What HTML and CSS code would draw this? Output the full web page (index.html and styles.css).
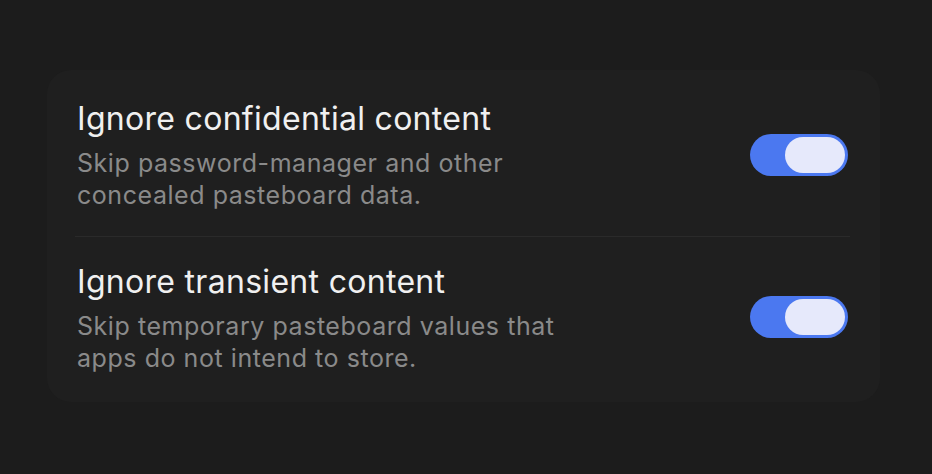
FILE: index.html
```html
<!DOCTYPE html>
<html>
<head>
<meta charset="utf-8">
<link rel="stylesheet" href="styles.css">
</head>
<body>
<div class="page">
  <div class="card">
    <div class="row">
      <div class="text">
        <div class="title">Ignore confidential content</div>
        <div class="desc">Skip password-manager and other concealed pasteboard data.</div>
      </div>
      <div class="toggle on"><div class="thumb"></div></div>
    </div>
    <div class="divider"></div>
    <div class="row">
      <div class="text">
        <div class="title">Ignore transient content</div>
        <div class="desc">Skip temporary pasteboard values that apps do not intend to store.</div>
      </div>
      <div class="toggle on"><div class="thumb"></div></div>
    </div>
  </div>
</div>
</body>
</html>
```
FILE: styles.css
```css
html, body {
  margin: 0;
  padding: 0;
  background: #1c1c1c;
  width: 932px;
  height: 474px;
  overflow: hidden;
  font-family: Inter, "Noto Sans", sans-serif;
}
.page {
  padding: 70px 52px 0 47px;
}
.card {
  background: #1f1f1f;
  border-radius: 24px;
  height: 332px;
  padding: 4px 32px 4px 30px;
  box-sizing: border-box;
  display: flex;
  flex-direction: column;
}
.row {
  flex: 1;
  display: flex;
  align-items: center;
  justify-content: space-between;
}
.text {
  display: flex;
  flex-direction: column;
  gap: 9px;
  padding-top: 2px;
}
.title {
  font-size: 32px;
  line-height: 38px;
  color: #f0f0f0;
  font-weight: 400;
  letter-spacing: 0.3px;
}
.desc {
  font-size: 25px;
  line-height: 32px;
  color: #8a8a8a;
  max-width: 520px;
  letter-spacing: 0.55px;
}
.divider {
  height: 1px;
  background: #2a2a2a;
  margin: 0 -2px 0 -2px;
}
.toggle {
  width: 98px;
  height: 42px;
  border-radius: 21px;
  background: #4b78f0;
  box-sizing: border-box;
  padding: 3px;
  display: flex;
  justify-content: flex-end;
}
.thumb {
  width: 60px;
  height: 36px;
  border-radius: 18px;
  background: #e6e9fb;
}
```
